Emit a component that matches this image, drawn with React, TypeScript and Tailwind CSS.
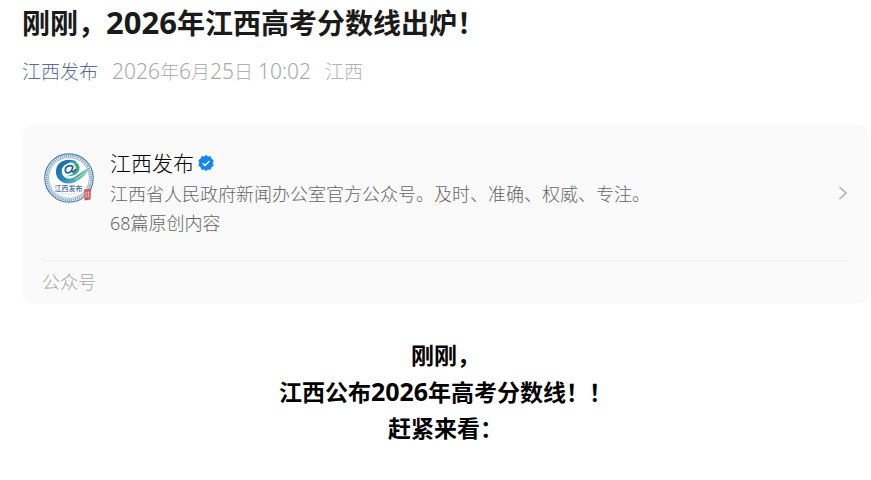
import type { ReactNode } from "react";

const account = {
  name: "江西发布",
  description: "江西省人民政府新闻办公室官方公众号。及时、准确、权威、专注。",
  originals: "68篇原创内容",
};

function MetaNum({ children }: { children: ReactNode }) {
  return <span className="text-[21px] text-[#a8a8a8]">{children}</span>;
}

function AccountLogo() {
  return (
    <svg className="h-[52px] w-[52px] shrink-0" viewBox="0 0 52 52" role="img" aria-label="江西发布">
      <defs>
        <linearGradient id="swirl" x1="0" y1="0" x2="1" y2="0.6">
          <stop offset="0" stopColor="#1c5fa6" />
          <stop offset="0.5" stopColor="#2388b8" />
          <stop offset="1" stopColor="#7cc9a4" />
        </linearGradient>
      </defs>
      <circle cx="26" cy="26" r="25" fill="#fff" />
      <circle cx="26" cy="26" r="24.2" fill="none" stroke="#4f7da3" strokeWidth="1.2" />
      <circle cx="26" cy="26" r="22.2" fill="none" stroke="#7fa3bf" strokeWidth="2" strokeDasharray="1.4 0.7" />
      <circle cx="26" cy="26" r="20.4" fill="none" stroke="#6f96b5" strokeWidth="0.7" />
      <path
        d="M34 10C27 5.500 16 8 13.500 16C11 24.500 17 31.500 25.500 31.500C34 31.500 40 26.500 47 15.500C41 18 36.500 22 31.500 25C25.500 28.500 19 26 18.800 19C18.700 13 26 9.500 34 10Z"
        fill="url(#swirl)"
      />
      <path d="M26 9.800C36 7.500 39.500 16 34 21.500C31 24 27 24.500 23 24C29 23.500 34 19 32.500 14.500C31.500 11.500 29 10.500 26 9.800Z" fill="#45a68a" />
      <path
        d="M30 14.500C26 12.300 22 15 22.300 18.500C22.600 21.500 26.500 22 28.500 18.500M30 14L28.700 19C29.500 21 32 19.500 32.500 17"
        fill="none"
        stroke="#1c649f"
        strokeWidth="1.700"
      />
      <path d="M32 27.500C37 25 41 21 44.500 17M33 29.500C38 27 41 24 43.500 21" fill="none" stroke="#d3ece4" strokeWidth="0.8" />
      <text
        x="25.500"
        y="39"
        textAnchor="middle"
        fill="#3f6a8f"
        className="font-['Noto_Sans_CJK_SC',sans-serif] text-[7px] font-medium"
      >
        江西发布
      </text>
      <path d="M17 42H34" stroke="#b3c4d1" strokeWidth="0.8" strokeDasharray="1.500 0.700" />
      <path d="M41 37.500L48 37L47.500 47.500L41.500 48.500Z" fill="#cc5355" />
      <path d="M43 39V46M45.500 39V46M42 41H47M42 44H46.500" stroke="#f5d6d6" strokeWidth="0.6" />
    </svg>
  );
}

function VerifiedBadge() {
  return (
    <svg className="h-4 w-4 shrink-0" viewBox="0 0 16 16" aria-hidden="true">
      <path
        d="M8 0.300L10 1.700L12.400 1.500L13.200 3.800L15.300 5.200L14.600 8L15.300 10.600L13.300 12.100L12.400 14.500L10 14.300L8 15.700L6 14.300L3.600 14.500L2.700 12.100L0.700 10.600L1.400 8L0.700 5.200L2.800 3.800L3.600 1.500L6 1.700Z"
        fill="#1485ee"
        stroke="#1485ee"
        strokeWidth="0.5"
        strokeLinejoin="round"
      />
      <path d="M4.700 8.200L7 10.500L11.500 6" fill="none" stroke="#fff" strokeWidth="1.400" />
    </svg>
  );
}

function AccountCard() {
  return (
    <section className="mt-[38px] rounded-[10px] bg-[#fafafa] px-5">
      <a href="#profile" className="flex items-center border-b border-[#f0f0f0] pt-[23px] pb-[22px]">
        <div className="mt-1 ml-px self-start">
          <AccountLogo />
        </div>
        <div className="ml-[15px] min-w-0 flex-1">
          <div className="flex items-center gap-1">
            <strong className="text-[21px] leading-[30px] font-light text-black">{account.name}</strong>
            <VerifiedBadge />
          </div>
          <div className="pt-[2px] text-[18px] leading-[29px] text-[#666666]">
            <p>{account.description}</p>
            <p>{account.originals}</p>
          </div>
        </div>
        <svg className="h-4 w-3 shrink-0" viewBox="0 0 12 16" aria-hidden="true">
          <path d="M2.500 2L9 8L2.500 14" fill="none" stroke="#b2b2b2" strokeWidth="1.600" />
        </svg>
      </a>
      <p className="py-2 text-[18px] leading-[27px] text-[#a6a6a6]">公众号</p>
    </section>
  );
}

export default function App() {
  return (
    <main className="bg-white pr-[2px] pb-8 pl-[22px] font-['Noto_Sans','Noto_Sans_CJK_SC',sans-serif] font-light">
      <h1 className="pt-[3px] text-[28px] leading-[38px] font-bold text-[#1a1a1a]">
        刚刚，<span className="text-[31px]">2026</span>年江西高考分数线出炉！
      </h1>
      <div className="mt-[15px] flex items-center gap-[14px] text-[19px] leading-[29px] text-[#b2b2b2]">
        <a href="#profile" className="text-[#576b95]">
          {account.name}
        </a>
        <time dateTime="2026-06-25T10:02">
          <MetaNum>2026</MetaNum>年<MetaNum>6</MetaNum>月<MetaNum>25</MetaNum>日 <MetaNum>10:02</MetaNum>
        </time>
        <span>江西</span>
      </div>
      <AccountCard />
      <article className="mt-[33px] text-center text-[23px] leading-[36px] font-bold text-black">
        <p>刚刚，</p>
        <p>
          江西公布<span className="text-[25px]">2026</span>年高考分数线！！
        </p>
        <p>赶紧来看：</p>
      </article>
    </main>
  );
}
